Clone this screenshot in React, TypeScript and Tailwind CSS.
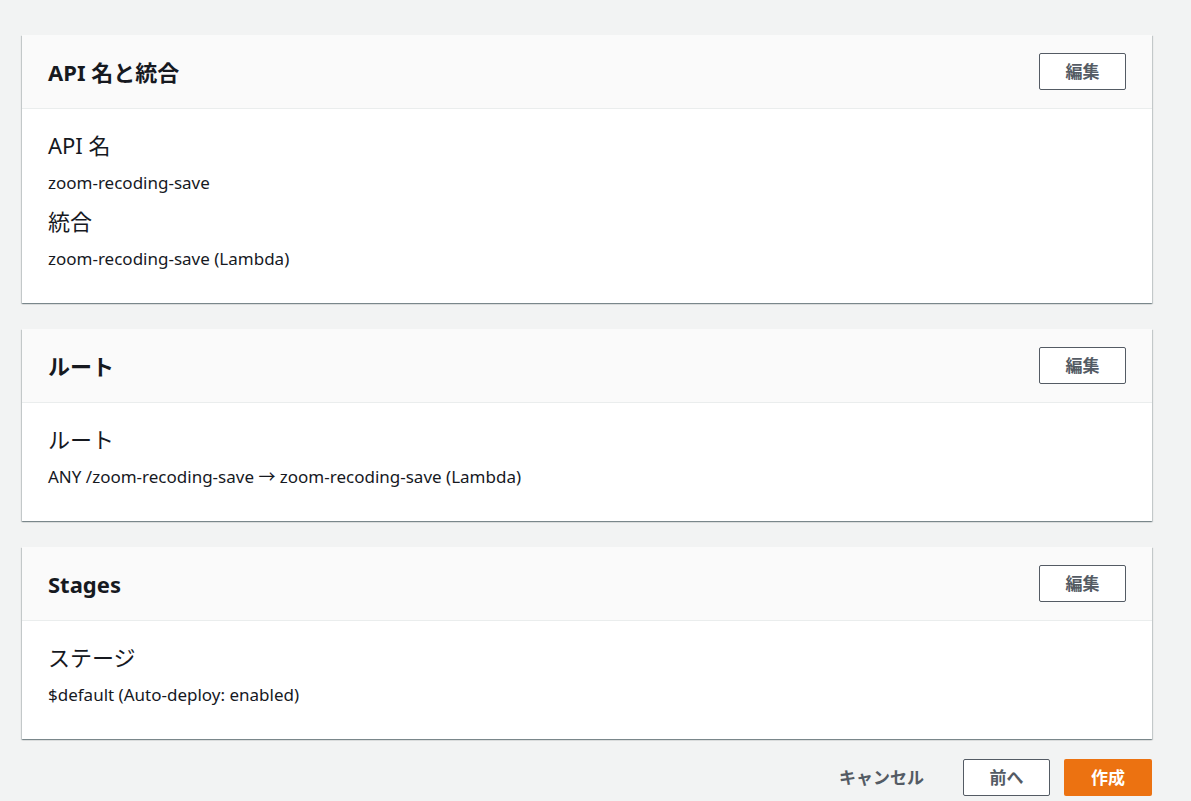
import React from 'react';

const font = { fontFamily: '"Noto Sans", "Noto Sans CJK JP", sans-serif' };

type Item = { label: string; value: string };

function Section({ title, items }: { title: string; items: Item[] }) {
  return (
    <section className="bg-white shadow-[0_1px_1px_0_rgba(0,28,36,0.3),1px_1px_1px_0_rgba(0,28,36,0.15),-1px_1px_1px_0_rgba(0,28,36,0.15)]">
      {/* Header */}
      <div className="h-[74px] flex items-center justify-between px-[26px] bg-[#fafafa] border-b border-[#eaeded]">
        <h2 className="text-[22px] font-bold text-[#16191f] leading-[30px]">{title}</h2>
        <button className="w-[87px] h-[37px] border border-[#545b64] rounded-[2px] bg-white text-[17px] font-bold text-[#545b64]">
          編集
        </button>
      </div>

      {/* Body */}
      <div className="px-[26px] pt-[21px] pb-[33px] flex flex-col gap-3">
        {items.map((it, i) => (
          <React.Fragment key={i}>
            <div className="text-[22px] leading-[30px] text-[#16191f]">{it.label}</div>
            <div className="text-[17px] leading-[22px] text-[#16191f]">{it.value}</div>
          </React.Fragment>
        ))}
      </div>
    </section>
  );
}

export default function App() {
  return (
    <div className="min-h-[801px] bg-[#f2f3f3]" style={font}>
      <div className="w-[1130px] ml-[22px] pt-[35px] flex flex-col gap-[26px]">
        <Section
          title="API 名と統合"
          items={[
            { label: 'API 名', value: 'zoom-recoding-save' },
            { label: '統合', value: 'zoom-recoding-save (Lambda)' },
          ]}
        />
        <Section
          title="ルート"
          items={[
            { label: 'ルート', value: 'ANY /zoom-recoding-save → zoom-recoding-save (Lambda)' },
          ]}
        />
        <Section
          title="Stages"
          items={[{ label: 'ステージ', value: '$default (Auto-deploy: enabled)' }]}
        />
      </div>

      {/* Footer actions */}
      <div className="w-[1130px] ml-[22px] mt-[20px] flex items-center justify-end">
        <button className="h-[37px] px-[20px] text-[17px] font-bold text-[#545b64] mr-[19px]">
          キャンセル
        </button>
        <button className="w-[87px] h-[37px] border border-[#545b64] rounded-[2px] bg-white text-[17px] font-bold text-[#545b64] mr-[14px]">
          前へ
        </button>
        <button className="w-[88px] h-[37px] rounded-[2px] bg-[#ec7211] text-[17px] font-bold text-white">
          作成
        </button>
      </div>
    </div>
  );
}
